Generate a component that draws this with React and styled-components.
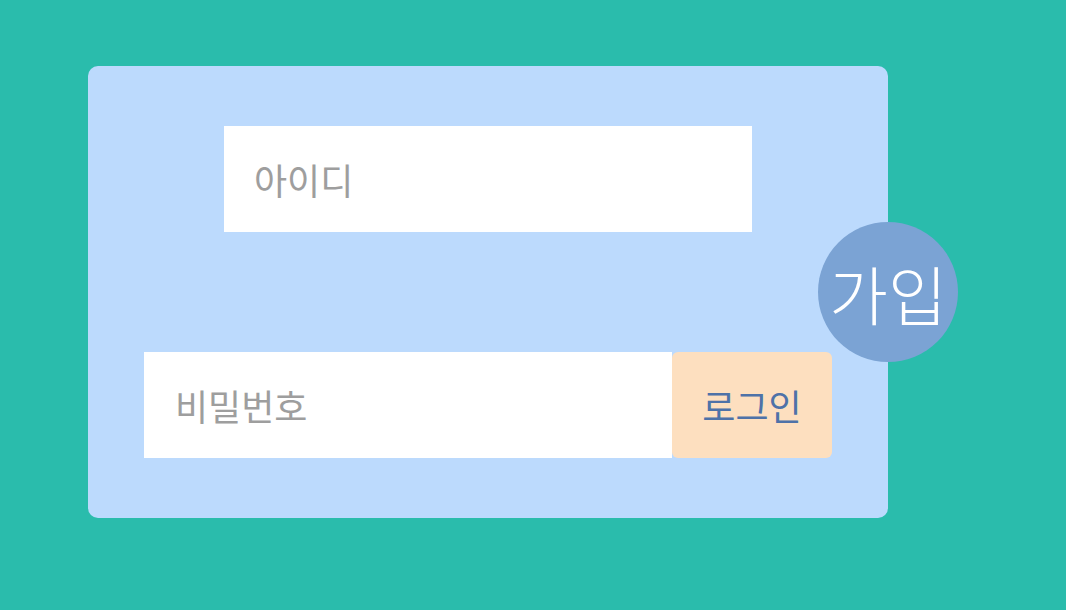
import React from "react";
import styled, { createGlobalStyle } from "styled-components";

const GlobalStyle = createGlobalStyle`
  html, body {
    margin: 0;
    padding: 0;
    background-color: #2abcac;
    font-family: "Noto Sans CJK KR", "Noto Sans", sans-serif;
  }
`;

const Page = styled.div`
  width: 1066px;
  height: 610px;
  padding: 66px 0 0 88px;
  box-sizing: border-box;
  background-color: #2abcac;
`;

const Card = styled.form`
  position: relative;
  width: 800px;
  height: 452px;
  box-sizing: border-box;
  padding: 60px 0;
  background-color: #bcdafd;
  border-radius: 10px;
  display: flex;
  flex-direction: column;
  align-items: center;
  gap: 120px;
`;

const Row = styled.div`
  display: flex;
  align-items: stretch;
`;

const Field = styled.input`
  width: 528px;
  height: 106px;
  box-sizing: border-box;
  border: none;
  outline: none;
  padding: 0 0 0 ${({ $indent }) => $indent}px;
  background-color: #ffffff;
  font-family: "Noto Sans CJK KR", "Noto Sans", sans-serif;
  font-size: 36px;
  color: #555;
  &::placeholder {
    color: #9e9e9e;
  }
`;

const LoginButton = styled.button`
  width: 160px;
  height: 106px;
  border: none;
  border-radius: 6px;
  background-color: #fddfbf;
  color: #4e72a8;
  font-family: "Noto Sans CJK KR", "Noto Sans", sans-serif;
  font-size: 36px;
  padding: 0;
  cursor: pointer;
`;

const JoinBadge = styled.button`
  position: absolute;
  right: -70px;
  top: 50%;
  transform: translateY(-50%);
  width: 140px;
  height: 140px;
  border: none;
  border-radius: 50%;
  background-color: #7ba3d4;
  color: #ffffff;
  font-family: "Noto Sans CJK KR", "Noto Sans", sans-serif;
  font-weight: 300;
  font-size: 64px;
  padding: 0;
  cursor: pointer;
`;

const App = () => {
  return (
    <Page>
      <GlobalStyle />
      <Card onSubmit={(e) => e.preventDefault()}>
        <Field placeholder="아이디" $indent={30} />
        <Row>
          <Field type="password" placeholder="비밀번호" $indent={31} />
          <LoginButton type="submit">로그인</LoginButton>
        </Row>
        <JoinBadge type="button">가입</JoinBadge>
      </Card>
    </Page>
  );
};

export default App;
